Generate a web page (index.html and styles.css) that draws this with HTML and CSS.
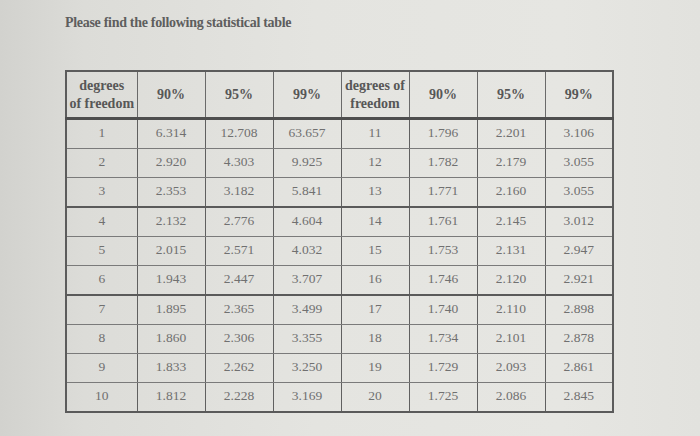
FILE: index.html
```html
<!DOCTYPE html>
<html>
<head>
<meta charset="utf-8">
<link rel="stylesheet" href="styles.css">
</head>
<body>
<div class="page">
  <p class="title">Please find the following statistical table</p>
  <table class="stats">
    <colgroup>
      <col class="c-first"><col><col><col><col><col><col><col>
    </colgroup>
    <thead>
      <tr>
        <th>degrees<br>of freedom</th>
        <th>90%</th><th>95%</th><th>99%</th>
        <th>degrees of<br>freedom</th>
        <th>90%</th><th>95%</th><th>99%</th>
      </tr>
    </thead>
    <tbody>
      <tr><td>1</td><td>6.314</td><td>12.708</td><td>63.657</td><td>11</td><td>1.796</td><td>2.201</td><td>3.106</td></tr>
      <tr><td>2</td><td>2.920</td><td>4.303</td><td>9.925</td><td>12</td><td>1.782</td><td>2.179</td><td>3.055</td></tr>
      <tr class="thick"><td>3</td><td>2.353</td><td>3.182</td><td>5.841</td><td>13</td><td>1.771</td><td>2.160</td><td>3.055</td></tr>
      <tr><td>4</td><td>2.132</td><td>2.776</td><td>4.604</td><td>14</td><td>1.761</td><td>2.145</td><td>3.012</td></tr>
      <tr><td>5</td><td>2.015</td><td>2.571</td><td>4.032</td><td>15</td><td>1.753</td><td>2.131</td><td>2.947</td></tr>
      <tr class="thick"><td>6</td><td>1.943</td><td>2.447</td><td>3.707</td><td>16</td><td>1.746</td><td>2.120</td><td>2.921</td></tr>
      <tr><td>7</td><td>1.895</td><td>2.365</td><td>3.499</td><td>17</td><td>1.740</td><td>2.110</td><td>2.898</td></tr>
      <tr><td>8</td><td>1.860</td><td>2.306</td><td>3.355</td><td>18</td><td>1.734</td><td>2.101</td><td>2.878</td></tr>
      <tr><td>9</td><td>1.833</td><td>2.262</td><td>3.250</td><td>19</td><td>1.729</td><td>2.093</td><td>2.861</td></tr>
      <tr><td>10</td><td>1.812</td><td>2.228</td><td>3.169</td><td>20</td><td>1.725</td><td>2.086</td><td>2.845</td></tr>
    </tbody>
  </table>
</div>
</body>
</html>
```

FILE: styles.css
```css
html, body {
  margin: 0;
  padding: 0;
}
body {
  width: 700px;
  height: 436px;
  overflow: hidden;
  background: linear-gradient(90deg, #d2d2ce 0%, #dcdcd8 12%, #e4e4e0 45%, #e6e6e2 80%, #e2e2de 100%);
  font-family: "Liberation Serif", "Times New Roman", serif;
  color: #555;
}
.page {
  padding: 13px 0 0 65px;
}
.title {
  margin: 0;
  font-size: 14px;
  font-weight: bold;
  color: #5e5e5e;
  letter-spacing: -0.3px;
  line-height: 20px;
}
.stats {
  margin-top: 37px;
  border-collapse: collapse;
  table-layout: fixed;
  width: 546px;
  border: 2px solid #5c5c5c;
}
.stats col { width: 68px; }
.stats col.c-first { width: 71px; }
.stats th {
  height: 45px;
  padding: 0;
  font-size: 14px;
  font-weight: bold;
  color: #575757;
  line-height: 18px;
  text-align: center;
  vertical-align: middle;
  border: 1px solid #6a6a6a;
  border-bottom: 3px solid #4e4e4e;
}
.stats td {
  height: 25px;
  padding: 0 0 3px 0;
  font-size: 13.5px;
  color: #707070;
  text-align: center;
  vertical-align: middle;
  border-left: 1px solid #606060;
  border-right: 1px solid #606060;
  border-bottom: 1px solid #7a7a7a;
}
.stats tr.thick td {
  border-bottom: 2px solid #5a5a5a;
}
.stats tbody tr:last-child td {
  border-bottom: 2px solid #5a5a5a;
}
```
